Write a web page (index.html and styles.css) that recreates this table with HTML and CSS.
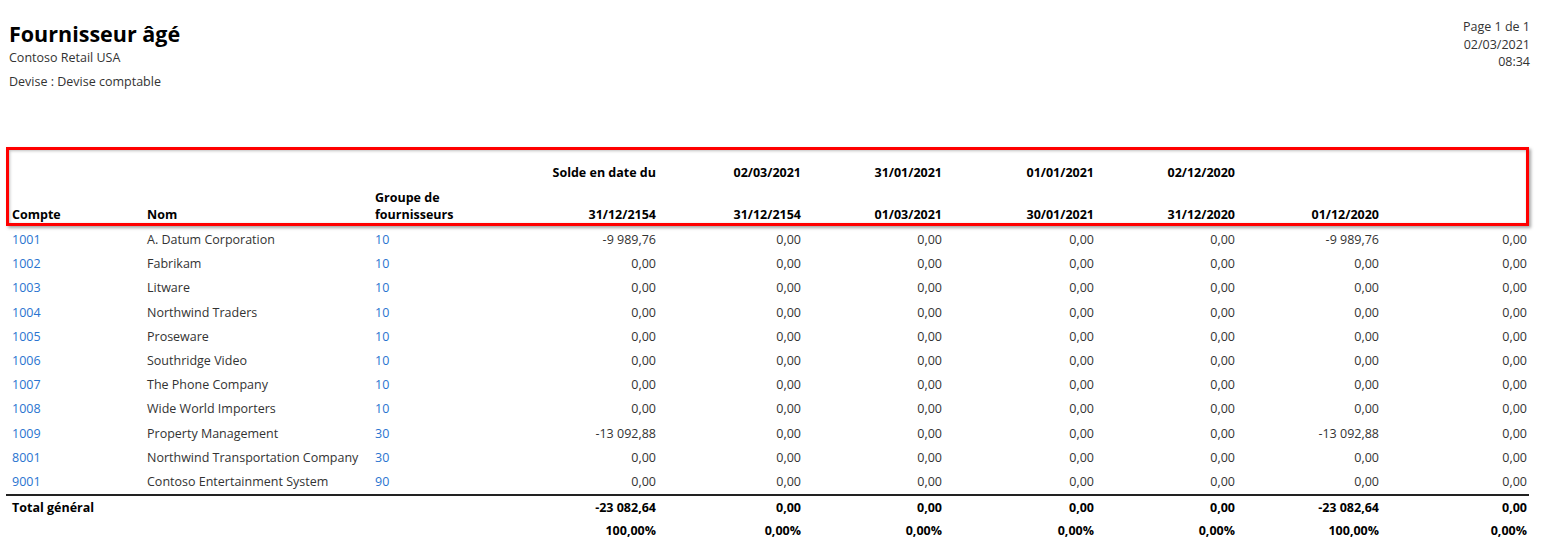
FILE: index.html
```html
<!DOCTYPE html>
<html>
<head>
    <title>Fournisseur âgé</title>
    <link rel="stylesheet" href="styles.css">
</head>
<body>
    <div class="report-top">
        <div class="report-title">
            <h1>Fournisseur âgé</h1>
            <div class="company">Contoso Retail USA</div>
            <div class="currency">Devise : Devise comptable</div>
        </div>
        <div class="page-info">
            <div>Page 1 de 1</div>
            <div>02/03/2021</div>
            <div>08:34</div>
        </div>
    </div>

    <div class="report-table">
        <div class="head">
            <div class="hcell bottom">Compte</div>
            <div class="hcell bottom">Nom</div>
            <div class="hcell bottom">Groupe de<br>fournisseurs</div>
            <div class="hcell num"><span>Solde en date du</span><span>31/12/2154</span></div>
            <div class="hcell num"><span>02/03/2021</span><span>31/12/2154</span></div>
            <div class="hcell num"><span>31/01/2021</span><span>01/03/2021</span></div>
            <div class="hcell num"><span>01/01/2021</span><span>30/01/2021</span></div>
            <div class="hcell num"><span>02/12/2020</span><span>31/12/2020</span></div>
            <div class="hcell num"><span></span><span>01/12/2020</span></div>
            <div class="hcell num"></div>
        </div>

        <div class="rows">
            <div class="row"><a class="link">1001</a><span>A. Datum Corporation</span><a class="link">10</a><span class="num">-9 989,76</span><span class="num">0,00</span><span class="num">0,00</span><span class="num">0,00</span><span class="num">0,00</span><span class="num">-9 989,76</span><span class="num">0,00</span></div>
            <div class="row"><a class="link">1002</a><span>Fabrikam</span><a class="link">10</a><span class="num">0,00</span><span class="num">0,00</span><span class="num">0,00</span><span class="num">0,00</span><span class="num">0,00</span><span class="num">0,00</span><span class="num">0,00</span></div>
            <div class="row"><a class="link">1003</a><span>Litware</span><a class="link">10</a><span class="num">0,00</span><span class="num">0,00</span><span class="num">0,00</span><span class="num">0,00</span><span class="num">0,00</span><span class="num">0,00</span><span class="num">0,00</span></div>
            <div class="row"><a class="link">1004</a><span>Northwind Traders</span><a class="link">10</a><span class="num">0,00</span><span class="num">0,00</span><span class="num">0,00</span><span class="num">0,00</span><span class="num">0,00</span><span class="num">0,00</span><span class="num">0,00</span></div>
            <div class="row"><a class="link">1005</a><span>Proseware</span><a class="link">10</a><span class="num">0,00</span><span class="num">0,00</span><span class="num">0,00</span><span class="num">0,00</span><span class="num">0,00</span><span class="num">0,00</span><span class="num">0,00</span></div>
            <div class="row"><a class="link">1006</a><span>Southridge Video</span><a class="link">10</a><span class="num">0,00</span><span class="num">0,00</span><span class="num">0,00</span><span class="num">0,00</span><span class="num">0,00</span><span class="num">0,00</span><span class="num">0,00</span></div>
            <div class="row"><a class="link">1007</a><span>The Phone Company</span><a class="link">10</a><span class="num">0,00</span><span class="num">0,00</span><span class="num">0,00</span><span class="num">0,00</span><span class="num">0,00</span><span class="num">0,00</span><span class="num">0,00</span></div>
            <div class="row"><a class="link">1008</a><span>Wide World Importers</span><a class="link">10</a><span class="num">0,00</span><span class="num">0,00</span><span class="num">0,00</span><span class="num">0,00</span><span class="num">0,00</span><span class="num">0,00</span><span class="num">0,00</span></div>
            <div class="row"><a class="link">1009</a><span>Property Management</span><a class="link">30</a><span class="num">-13 092,88</span><span class="num">0,00</span><span class="num">0,00</span><span class="num">0,00</span><span class="num">0,00</span><span class="num">-13 092,88</span><span class="num">0,00</span></div>
            <div class="row"><a class="link">8001</a><span>Northwind Transportation Company</span><a class="link">30</a><span class="num">0,00</span><span class="num">0,00</span><span class="num">0,00</span><span class="num">0,00</span><span class="num">0,00</span><span class="num">0,00</span><span class="num">0,00</span></div>
            <div class="row"><a class="link">9001</a><span>Contoso Entertainment System</span><a class="link">90</a><span class="num">0,00</span><span class="num">0,00</span><span class="num">0,00</span><span class="num">0,00</span><span class="num">0,00</span><span class="num">0,00</span><span class="num">0,00</span></div>
        </div>

        <div class="row total"><span class="label">Total général</span><span class="num">-23 082,64</span><span class="num">0,00</span><span class="num">0,00</span><span class="num">0,00</span><span class="num">0,00</span><span class="num">-23 082,64</span><span class="num">0,00</span></div>
        <div class="row percent"><span class="label"></span><span class="num">100,00%</span><span class="num">0,00%</span><span class="num">0,00%</span><span class="num">0,00%</span><span class="num">0,00%</span><span class="num">100,00%</span><span class="num">0,00%</span></div>
    </div>
</body>
</html>
```

FILE: styles.css
```css
body {
    margin: 0;
    font-family: "Open Sans", "Noto Sans", sans-serif;
    font-size: 12.5px;
    color: #333;
    background: #fff;
}

.report-top {
    display: flex;
    justify-content: space-between;
    padding: 20px 33px 0 9px;
    height: 147px;
    box-sizing: border-box;
}

h1 {
    margin: 0;
    font-size: 21.5px;
    line-height: 28px;
    font-weight: bold;
    color: #000;
}

.company {
    line-height: 18px;
    margin-top: 1px;
}

.currency {
    margin-top: 6px;
    line-height: 18px;
}

.page-info {
    text-align: right;
    line-height: 17.5px;
    margin-top: -2px;
}

.report-table {
    margin: 0 6px;
    width: 1523px;
}

.head, .row {
    display: grid;
    grid-template-columns: 135px 228px 135px 146px 145px 141px 152px 141px 144px 148px;
}

.head {
    border: 3px solid #f00;
    box-shadow: 2px 2px 3px rgba(0,0,0,0.35), inset 1px 1px 3px rgba(0,0,0,0.25);
    padding-left: 3px;
    height: 79px;
    box-sizing: border-box;
    font-weight: bold;
    color: #000;
}

.hcell {
    display: flex;
    flex-direction: column;
    justify-content: space-between;
    padding: 14px 0 0;
    line-height: 17px;
    white-space: nowrap;
}

.hcell.bottom {
    justify-content: flex-end;
}

.hcell.num {
    align-items: flex-end;
}

.rows {
    padding-top: 2px;
}

.row {
    padding-left: 6px;
    height: 24.2px;
    line-height: 24.2px;
    white-space: nowrap;
}

.num {
    text-align: right;
}

.link {
    color: #2a74d0;
}

.total {
    border-top: 2px solid #222;
    font-weight: bold;
    color: #000;
    height: 24px;
    line-height: 24px;
}

.percent {
    font-weight: bold;
    color: #000;
    height: 22px;
    line-height: 22px;
}

.label {
    grid-column: 1 / 4;
}
```
